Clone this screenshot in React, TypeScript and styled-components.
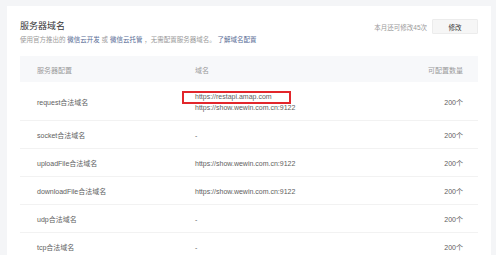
import React from "react";
import styled, { createGlobalStyle } from "styled-components";

interface DomainRow {
  name: string;
  urls: string[];
  quota: string;
  highlight?: boolean;
}

const rows: DomainRow[] = [
  {
    name: "request合法域名",
    urls: ["https://restapi.amap.com", "https://show.wewin.com.cn:9122"],
    quota: "200个",
    highlight: true,
  },
  { name: "socket合法域名", urls: ["-"], quota: "200个" },
  { name: "uploadFile合法域名", urls: ["https://show.wewin.com.cn:9122"], quota: "200个" },
  { name: "downloadFile合法域名", urls: ["https://show.wewin.com.cn:9122"], quota: "200个" },
  { name: "udp合法域名", urls: ["-"], quota: "200个" },
  { name: "tcp合法域名", urls: ["-"], quota: "200个" },
];

const GlobalStyle = createGlobalStyle`
  body {
    margin: 0;
    background: #f4f5f7;
    font-family: "Liberation Sans", "Noto Sans CJK SC", sans-serif;
  }
`;

const Page = styled.div`
  padding: 6px 5px 0 7px;
  height: 255px;
  overflow: hidden;
  box-sizing: border-box;
`;

const Card = styled.section`
  background: #ffffff;
  padding: 14px 13px 0 13px;
  min-height: 260px;
`;

const Header = styled.div`
  display: flex;
  justify-content: space-between;
  align-items: flex-start;
`;

const Title = styled.h2`
  margin: 0;
  font-size: 9px;
  line-height: 13px;
  font-weight: normal;
  color: #353535;
`;

const Desc = styled.p`
  margin: 2px 0 0;
  font-size: 6.5px;
  line-height: 10px;
  color: #9a9a9a;
`;

const Link = styled.a`
  color: #576b95;
  text-decoration: none;
`;

const Actions = styled.div`
  display: flex;
  align-items: center;
  gap: 5px;
  margin-top: -1px;
`;

const Quota = styled.span`
  font-size: 6.5px;
  color: #9a9a9a;
`;

const Button = styled.button`
  width: 46px;
  height: 15px;
  padding: 0;
  background: #f6f6f6;
  border: 1px solid #ececec;
  border-radius: 1px;
  font-family: inherit;
  font-size: 6.5px;
  color: #353535;
`;

const Table = styled.div`
  margin-top: 11px;
`;

const Row = styled.div<{ $head?: boolean; $tall?: boolean }>`
  display: grid;
  grid-template-columns: 158px 1fr 80px;
  align-items: center;
  height: ${(p) => (p.$head ? "26px" : p.$tall ? "39px" : "28px")};
  box-sizing: border-box;
  padding: 0 15px 0 17px;
  background: ${(p) => (p.$head ? "#f7f8fa" : "#ffffff")};
  border-bottom: ${(p) => (p.$head ? "none" : "1px solid #f2f2f2")};
  font-size: 7px;
  color: ${(p) => (p.$head ? "#9a9a9a" : "#5e5e5e")};
`;

const Cell = styled.div<{ $right?: boolean }>`
  text-align: ${(p) => (p.$right ? "right" : "left")};
  padding-top: 1px;
`;

const UrlLine = styled.div`
  position: relative;
  line-height: 11px;
`;

const Highlight = styled.span`
  position: absolute;
  left: -13.5px;
  top: 0;
  width: 109px;
  height: 13px;
  box-sizing: border-box;
  border: 2px solid #e2262b;
`;

export default function App() {
  return (
    <>
      <GlobalStyle />
      <Page>
        <Card>
          <Header>
            <div>
              <Title>服务器域名</Title>
              <Desc>
                使用官方推出的 <Link>微信云开发</Link> 或 <Link>微信云托管</Link> ，无需配置服务器域名。{" "}
                <Link>了解域名配置</Link>
              </Desc>
            </div>
            <Actions>
              <Quota>本月还可修改45次</Quota>
              <Button>修改</Button>
            </Actions>
          </Header>
          <Table>
            <Row $head>
              <Cell>服务器配置</Cell>
              <Cell>域名</Cell>
              <Cell $right>可配置数量</Cell>
            </Row>
            {rows.map((row) => (
              <Row key={row.name} $tall={row.urls.length > 1}>
                <Cell>{row.name}</Cell>
                <Cell>
                  {row.urls.map((url, i) => (
                    <UrlLine key={url + i}>
                      {row.highlight && i === 0 && <Highlight />}
                      {url}
                    </UrlLine>
                  ))}
                </Cell>
                <Cell $right>{row.quota}</Cell>
              </Row>
            ))}
          </Table>
        </Card>
      </Page>
    </>
  );
}
